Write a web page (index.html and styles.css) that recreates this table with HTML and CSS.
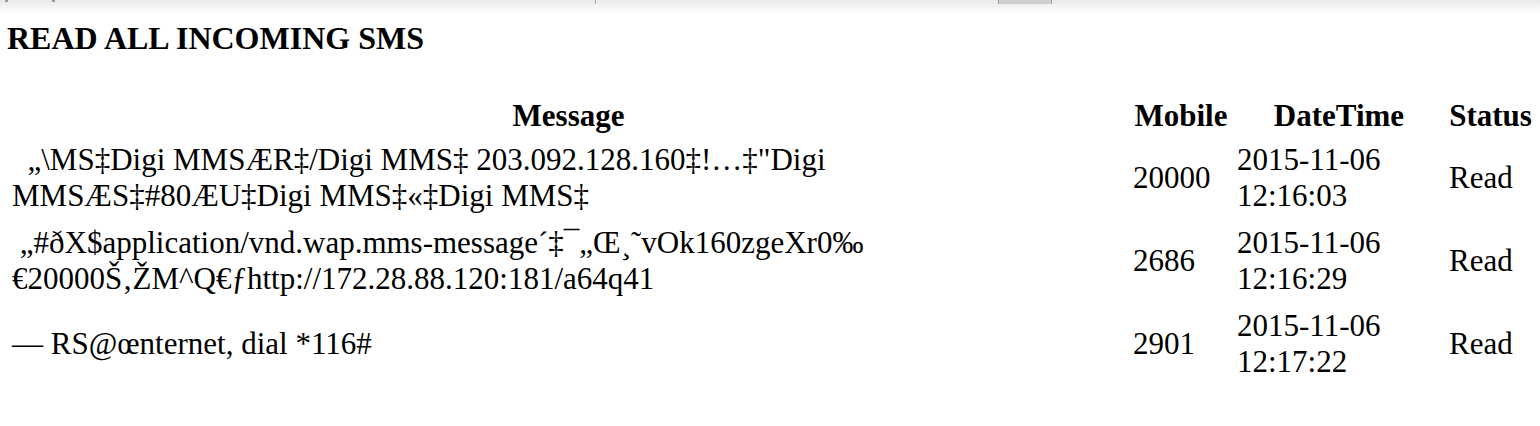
FILE: index.html
```html
<!DOCTYPE html>
<html>
<head>
<meta charset="utf-8">
<title>Read all incoming SMS</title>
<link rel="stylesheet" href="styles.css">
</head>
<body>
<div class="topbar">
  <span class="mark mark-a"></span>
  <span class="mark mark-b"></span>
  <span class="tick"></span>
  <span class="thumb"></span>
</div>
<div class="page">
  <h4 class="title">READ ALL INCOMING SMS</h4>
  <table class="sms">
    <colgroup>
      <col class="c-msg">
      <col class="c-mob">
      <col class="c-dt">
      <col class="c-st">
    </colgroup>
    <thead>
      <tr><th>Message</th><th>Mobile</th><th>DateTime</th><th>Status</th></tr>
    </thead>
    <tbody>
      <tr>
        <td>&nbsp;&nbsp;„\MS‡Digi MMSÆR‡/Digi MMS‡ 203.092.128.160‡!…‡"Digi MMSÆS‡#80ÆU‡Digi MMS‡«‡Digi MMS‡</td>
        <td>20000</td>
        <td>2015-11-06 12:16:03</td>
        <td>Read</td>
      </tr>
      <tr>
        <td>&nbsp;„#ðX$application/vnd.wap.mms-message´‡¯„Œ¸˜vOk160zgeXr0‰ €20000Š‚ŽM^Q€ƒhttp://172.28.88.120:181/a64q41</td>
        <td>2686</td>
        <td>2015-11-06 12:16:29</td>
        <td>Read</td>
      </tr>
      <tr>
        <td>— RS@œnternet, dial *116#</td>
        <td>2901</td>
        <td>2015-11-06 12:17:22</td>
        <td>Read</td>
      </tr>
    </tbody>
  </table>
</div>
</body>
</html>
```
FILE: styles.css
```css
html, body {
  margin: 0;
  padding: 0;
  background: #ffffff;
}
body {
  font-family: "Liberation Serif", "Times New Roman", serif;
  font-size: 31px;
  color: #000000;
}
.topbar {
  height: 14px;
  background: linear-gradient(#e9e9e9, #ffffff);
  display: flex;
  align-items: flex-start;
}
.mark {
  width: 3px;
  height: 2px;
  background: #9a9a9a;
}
.mark-a { margin-left: 5px; }
.mark-b { margin-left: 44px; }
.tick {
  width: 1px;
  height: 4px;
  background: #a8a8a8;
  margin-left: 540px;
}
.thumb {
  width: 52px;
  height: 4px;
  background: #cfcfcf;
  border-left: 1px solid #a0a0a0;
  border-right: 1px solid #a0a0a0;
  margin-left: 402px;
}
.page {
  padding: 0 8px;
}
.title {
  font-size: 32px;
  font-weight: bold;
  margin: 6px 0 39px -1px;
  line-height: normal;
}
.sms {
  width: 1524px;
  table-layout: fixed;
  border-collapse: separate;
  border-spacing: 0;
}
.c-msg { width: 1121px; }
.c-mob { width: 104px; }
.c-dt { width: 212px; }
.c-st { width: 87px; }
.sms th {
  font-weight: bold;
  text-align: center;
  padding: 2px 4px;
  vertical-align: middle;
}
.sms td {
  text-align: left;
  padding: 6px 4px 5px 4px;
  vertical-align: middle;
}
.sms th:last-child,
.sms td:last-child {
  padding-right: 0;
}
```
